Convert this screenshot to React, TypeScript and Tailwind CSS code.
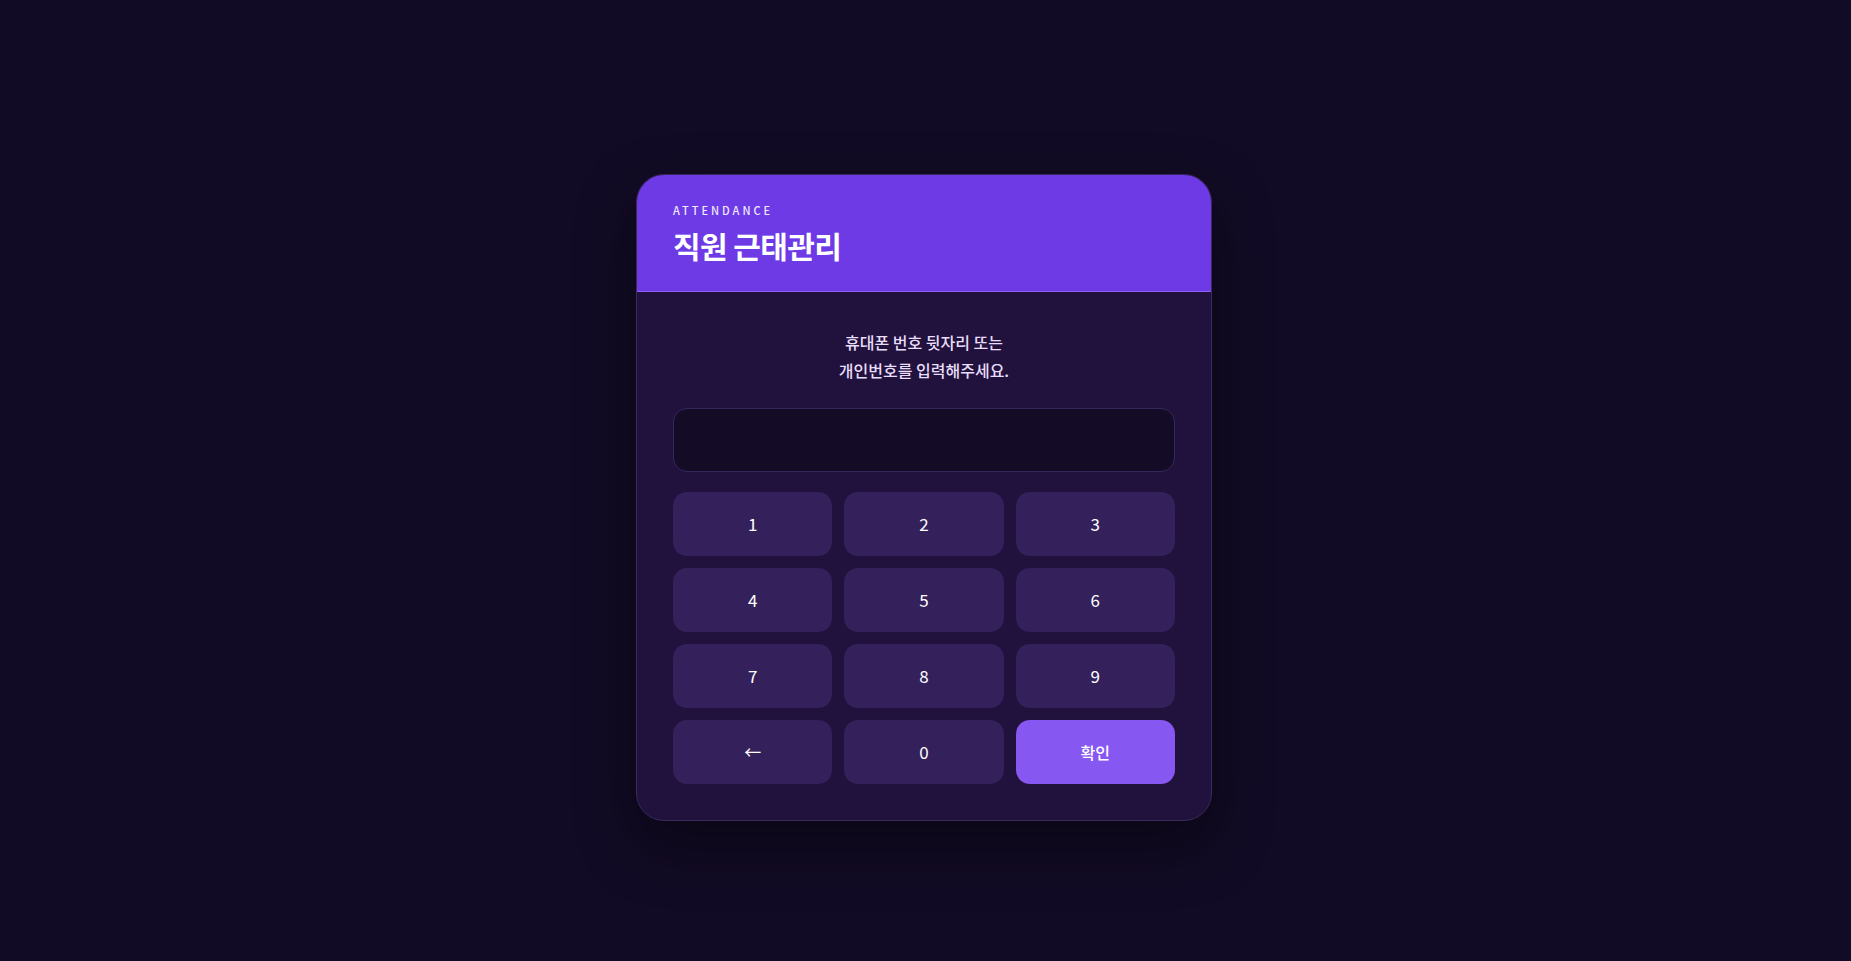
import React, { useState } from "react";

const keys = ["1", "2", "3", "4", "5", "6", "7", "8", "9"];

export default function App() {
  const [value, setValue] = useState("");
  const press = (k: string) => setValue((v) => (v + k).slice(0, 12));
  const back = () => setValue((v) => v.slice(0, -1));

  return (
    <div
      className="min-h-screen w-full bg-[#120b25] flex items-center justify-center pt-[34px] pr-[3px]"
      style={{ fontFamily: '"Noto Sans CJK KR", "Noto Sans", sans-serif' }}
    >
      <div className="w-[576px] rounded-[28px] border border-[#3a2a5c] bg-[#21113d] overflow-hidden shadow-[0_24px_60px_rgba(0,0,0,0.45)]">
        <div className="bg-[#6d3ae6] border-b border-[#8b63f5] px-9 pt-[27px] pb-[28px]">
          <div className="text-[11px] leading-4 font-medium tracking-[0.27em] text-[#efe9ff]">
            ATTENDANCE
          </div>
          <div className="mt-[9px] text-[30px] leading-9 font-bold tracking-[-0.02em] text-white">
            직원 근태관리
          </div>
        </div>
        <div className="px-9 pt-9 pb-9">
          <p className="text-center text-[16px] leading-7 font-medium text-[#e8def9] mb-6">
            휴대폰 번호 뒷자리 또는
            <br />
            개인번호를 입력해주세요.
          </p>
          <div className="h-16 mb-5 rounded-[14px] border border-[#36275a] bg-[#140b27] flex items-center justify-center text-white text-2xl tracking-[0.3em]">
            {value}
          </div>
          <div className="grid grid-cols-3 gap-3">
            {keys.map((k) => (
              <button
                key={k}
                onClick={() => press(k)}
                className="h-16 rounded-[14px] bg-[#34215b] text-white text-[17px] flex items-center justify-center"
              >
                {k}
              </button>
            ))}
            <button
              onClick={back}
              className="h-16 rounded-[14px] bg-[#34215b] text-white text-[17px] flex items-center justify-center"
            >
              ←
            </button>
            <button
              onClick={() => press("0")}
              className="h-16 rounded-[14px] bg-[#34215b] text-white text-[17px] flex items-center justify-center"
            >
              0
            </button>
            <button className="h-16 rounded-[14px] bg-[#8657f1] text-white text-[16px] font-medium flex items-center justify-center">
              확인
            </button>
          </div>
        </div>
      </div>
    </div>
  );
}
